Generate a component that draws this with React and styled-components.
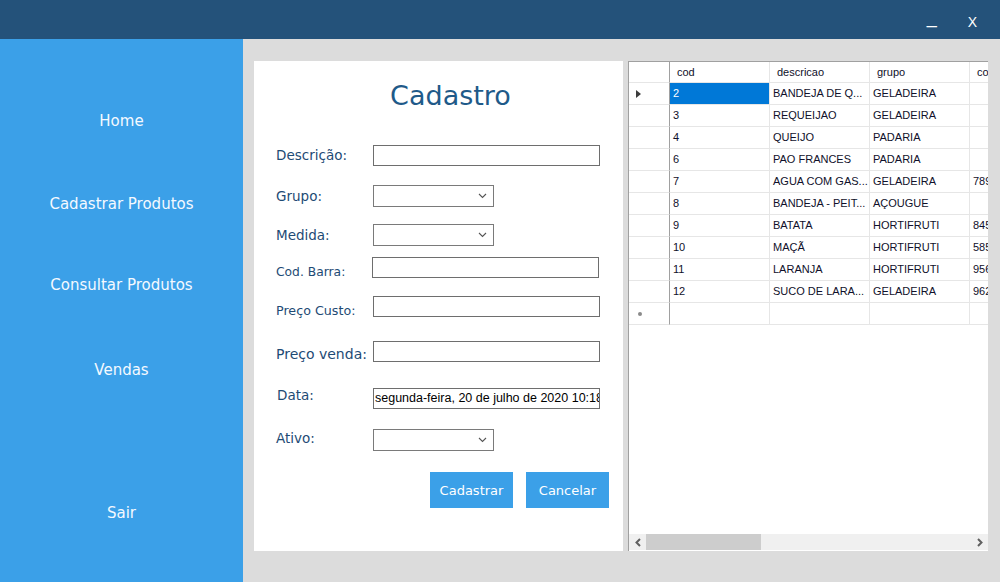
import React from "react"
import styled, { createGlobalStyle } from "styled-components"

const GlobalStyle = createGlobalStyle`
  html, body {
    margin: 0;
    padding: 0;
    width: 1000px;
    height: 582px;
    overflow: hidden;
    background: #dcdcdc;
  }
  * { box-sizing: border-box; }
`

const Window = styled.div`
  width: 1000px;
  height: 582px;
  display: flex;
  flex-direction: column;
  font-family: "DejaVu Sans", Verdana, sans-serif;
`

const TitleBar = styled.div`
  height: 39px;
  flex: none;
  background: #24527a;
  display: flex;
  justify-content: flex-end;
  align-items: center;
  padding-right: 23px;
  gap: 31px;
  color: #ffffff;
  font-family: "Liberation Sans", Arial, sans-serif;
`

const WinButton = styled.span`
  font-size: ${p => p.$size}px;
  line-height: 1;
  margin-top: ${p => p.$dy}px;
`

const Body = styled.div`
  flex: 1;
  display: flex;
`

const Sidebar = styled.nav`
  width: 243px;
  flex: none;
  background: #3ba0e8;
  display: flex;
  flex-direction: column;
  align-items: center;
`

const NavItem = styled.div`
  height: 30px;
  line-height: 30px;
  margin-top: ${p => p.$mt}px;
  color: #f4f9ff;
  font-size: 15px;
`

const Main = styled.main`
  flex: 1;
  display: flex;
  gap: 5px;
  padding: 22px 12px 31px 11px;
  background: #dcdcdc;
`

const FormPanel = styled.section`
  width: 369px;
  background: #ffffff;
  display: flex;
  flex-direction: column;
  padding: 19px 14px 0 22px;
`

const Title = styled.h1`
  margin: 0;
  height: 32px;
  line-height: 32px;
  font-weight: normal;
  font-size: 27px;
  color: #1f5a89;
  text-align: center;
  padding-left: 16px;
`

const Row = styled.div`
  display: flex;
  align-items: center;
  height: ${p => p.$h}px;
  margin-top: ${p => p.$mt}px;
`

const Label = styled.label`
  width: 97px;
  flex: none;
  font-size: ${p => p.$size}px;
  color: #1e4b75;
  white-space: nowrap;
  padding-left: ${p => p.$dx || 0}px;
  margin-top: ${p => (p.$dy > 0 ? p.$dy * 2 : 0)}px;
  margin-bottom: ${p => (p.$dy < 0 ? -p.$dy * 2 : 0)}px;
`

const TextBox = styled.div`
  width: 227px;
  height: 100%;
  border: 1px solid #6e6e6e;
  background: #ffffff;
  margin-left: ${p => p.$dx || 0}px;
  overflow: hidden;
  white-space: nowrap;
  font-family: "Liberation Sans", Arial, sans-serif;
  font-size: 12.5px;
  color: #000000;
  line-height: 18px;
  padding-left: 1px;
`

const Select = styled.div`
  width: 121px;
  height: 100%;
  border: 1px solid #7a7a7a;
  background: #ffffff;
  display: flex;
  align-items: center;
  justify-content: flex-end;
  padding-right: 6px;
`

const Buttons = styled.div`
  display: flex;
  justify-content: flex-end;
  gap: 13px;
  margin-top: 21px;
`

const Button = styled.button`
  width: 83px;
  height: 36px;
  border: none;
  background: #3ba0e8;
  color: #ffffff;
  font-family: "DejaVu Sans", Verdana, sans-serif;
  font-size: 13px;
  padding: 0;
`

const GridPanel = styled.section`
  width: 360px;
  background: #ffffff;
  border-left: 1px solid #a0a0a0;
  border-top: 1px solid #a0a0a0;
  display: flex;
  flex-direction: column;
  overflow: hidden;
`

const GridBody = styled.div`
  flex: 1;
  overflow: hidden;
`

const Table = styled.div`
  display: grid;
  grid-template-columns: 41px 100px 100px 100px 120px;
  width: 461px;
  font-family: "Liberation Sans", Arial, sans-serif;
  font-size: 11px;
`

const Cell = styled.div`
  height: ${p => (p.$head ? 21 : 22)}px;
  line-height: ${p => (p.$head ? 20 : 21)}px;
  border-right: 1px solid ${p => (p.$rowHead ? "#a0a0a0" : "#e6e6e6")};
  border-bottom: 1px solid #e6e6e6;
  padding-left: ${p => (p.$head ? 7 : 3)}px;
  color: ${p => (p.$selected ? "#ffffff" : "#10102a")};
  background: ${p => (p.$selected ? "#0078d7" : "#ffffff")};
  white-space: nowrap;
  overflow: hidden;
  display: flex;
  align-items: center;
`

const Arrow = styled.span`
  width: 0;
  height: 0;
  margin-left: 4px;
  border-top: 4px solid transparent;
  border-bottom: 4px solid transparent;
  border-left: 5px solid #3c3c3c;
`

const Star = styled.span`
  width: 4px;
  height: 4px;
  border-radius: 50%;
  background: #8a8a8a;
  margin-left: 6px;
`

const ScrollBar = styled.div`
  height: 16px;
  flex: none;
  background: #f0f0f0;
  display: flex;
  align-items: center;
  margin-bottom: 1px;
`

const ScrollArrow = styled.div`
  width: 17px;
  height: 100%;
  display: flex;
  align-items: center;
  justify-content: center;
  flex: none;
`

const Thumb = styled.div`
  width: 115px;
  height: 100%;
  background: #cdcdcd;
`

const Track = styled.div`
  flex: 1;
`

function Chevron() {
  return (
    <svg width="9" height="6" viewBox="0 0 9 6">
      <path d="M1 1 L4.5 4.5 L8 1" fill="none" stroke="#555" strokeWidth="1.1" />
    </svg>
  )
}

function ScrollGlyph({ dir }) {
  const d = dir === "left" ? "M6 1 L2.5 4.5 L6 8" : "M2 1 L5.5 4.5 L2 8"
  return (
    <svg width="8" height="9" viewBox="0 0 8 9">
      <path d={d} fill="none" stroke="#606060" strokeWidth="2" />
    </svg>
  )
}

const rows = [
  ["2", "BANDEJA DE Q...", "GELADEIRA", ""],
  ["3", "REQUEIJAO", "GELADEIRA", ""],
  ["4", "QUEIJO", "PADARIA", ""],
  ["6", "PAO FRANCES", "PADARIA", ""],
  ["7", "AGUA COM GAS...", "GELADEIRA", "7891234567"],
  ["8", "BANDEJA - PEIT...", "AÇOUGUE", ""],
  ["9", "BATATA", "HORTIFRUTI", "8451236547"],
  ["10", "MAÇÃ", "HORTIFRUTI", "5851247896"],
  ["11", "LARANJA", "HORTIFRUTI", "9561234785"],
  ["12", "SUCO DE LARA...", "GELADEIRA", "9621478523"],
]

export default function App() {
  return (
    <>
      <GlobalStyle />
      <Window>
        <TitleBar>
          <WinButton $size={18} $dy={-6}>_</WinButton>
          <WinButton $size={14} $dy={4}>X</WinButton>
        </TitleBar>
        <Body>
          <Sidebar>
            <NavItem $mt={67}>Home</NavItem>
            <NavItem $mt={53}>Cadastrar Produtos</NavItem>
            <NavItem $mt={51}>Consultar Produtos</NavItem>
            <NavItem $mt={55}>Vendas</NavItem>
            <NavItem $mt={113}>Sair</NavItem>
          </Sidebar>
          <Main>
            <FormPanel>
              <Title>Cadastro</Title>
              <Row $h={21} $mt={33}>
                <Label $size={13.5} $dy={-1}>Descrição:</Label>
                <TextBox />
              </Row>
              <Row $h={22} $mt={19}>
                <Label $size={13.5}>Grupo:</Label>
                <Select><Chevron /></Select>
              </Row>
              <Row $h={22} $mt={17}>
                <Label $size={13.5}>Medida:</Label>
                <Select><Chevron /></Select>
              </Row>
              <Row $h={21} $mt={11}>
                <Label $size={12.3} $dy={4}>Cod. Barra:</Label>
                <TextBox $dx={-1} />
              </Row>
              <Row $h={21} $mt={18}>
                <Label $size={12.7} $dy={4}>Preço Custo:</Label>
                <TextBox />
              </Row>
              <Row $h={21} $mt={24}>
                <Label $size={14} $dy={2}>Preço venda:</Label>
                <TextBox />
              </Row>
              <Row $h={21} $mt={26}>
                <Label $size={13.5} $dy={-4} $dx={1}>Data:</Label>
                <TextBox>segunda-feira, 20 de julho de 2020 10:18</TextBox>
              </Row>
              <Row $h={22} $mt={20}>
                <Label $size={13.5} $dy={-2}>Ativo:</Label>
                <Select><Chevron /></Select>
              </Row>
              <Buttons>
                <Button>Cadastrar</Button>
                <Button>Cancelar</Button>
              </Buttons>
            </FormPanel>
            <GridPanel>
              <GridBody>
                <Table>
                  <Cell $head $rowHead />
                  <Cell $head>cod</Cell>
                  <Cell $head>descricao</Cell>
                  <Cell $head>grupo</Cell>
                  <Cell $head>codbarra</Cell>
                  {rows.map((r, i) => (
                    <React.Fragment key={r[0]}>
                      <Cell $rowHead>{i === 0 && <Arrow />}</Cell>
                      <Cell $selected={i === 0}>{r[0]}</Cell>
                      <Cell>{r[1]}</Cell>
                      <Cell>{r[2]}</Cell>
                      <Cell>{r[3]}</Cell>
                    </React.Fragment>
                  ))}
                  <Cell $rowHead><Star /></Cell>
                  <Cell />
                  <Cell />
                  <Cell />
                  <Cell />
                </Table>
              </GridBody>
              <ScrollBar>
                <ScrollArrow><ScrollGlyph dir="left" /></ScrollArrow>
                <Thumb />
                <Track />
                <ScrollArrow><ScrollGlyph dir="right" /></ScrollArrow>
              </ScrollBar>
            </GridPanel>
          </Main>
        </Body>
      </Window>
    </>
  )
}
